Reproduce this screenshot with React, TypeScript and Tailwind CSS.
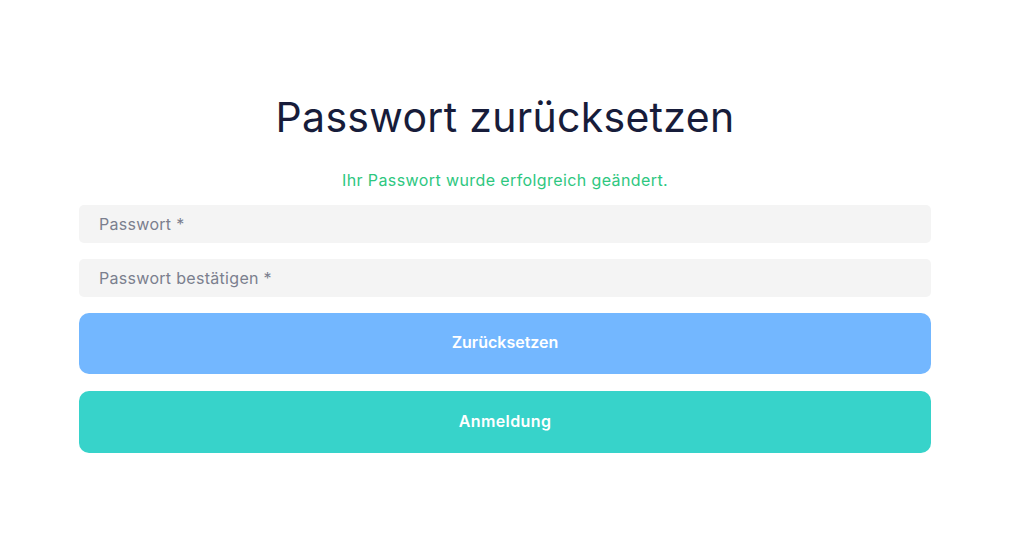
export default function App() {
  return (
    <div
      className="min-h-screen w-full bg-white flex flex-col items-start pl-[79px] pt-[91px]"
      style={{ fontFamily: "Inter, 'Open Sans', sans-serif" }}
    >
      <div className="w-[852px] flex flex-col">
        <h1 className="text-center text-[41px] leading-[52px] font-normal text-[#171c3a] tracking-[0.3px]">
          Passwort zurücksetzen
        </h1>
        <p className="mt-[26px] text-center text-[16px] leading-[22px] text-[#2ec77f] tracking-[0.4px]">
          Ihr Passwort wurde erfolgreich geändert.
        </p>
        <form className="mt-[14px] flex flex-col">
          <input
            type="password"
            placeholder="Passwort *"
            className="h-[38px] w-full rounded-[5px] bg-[#f4f4f4] px-5 text-[16px] tracking-[0.3px] text-[#333] placeholder:text-[#7b7f8e] outline-none"
          />
          <input
            type="password"
            placeholder="Passwort bestätigen *"
            className="mt-[16px] h-[38px] w-full rounded-[5px] bg-[#f4f4f4] px-5 text-[16px] tracking-[0.3px] text-[#333] placeholder:text-[#7b7f8e] outline-none"
          />
          <button
            type="button"
            className="mt-[16px] h-[61px] w-full rounded-[10px] bg-[#73b7ff] pb-[3px] text-white text-[16px] font-semibold"
          >
            Zurücksetzen
          </button>
          <button
            type="button"
            className="mt-[17px] h-[62px] w-full rounded-[10px] bg-[#37d3ca] pb-[2px] text-white text-[16px] font-semibold tracking-[0.4px]"
          >
            Anmeldung
          </button>
        </form>
      </div>
    </div>
  );
}
